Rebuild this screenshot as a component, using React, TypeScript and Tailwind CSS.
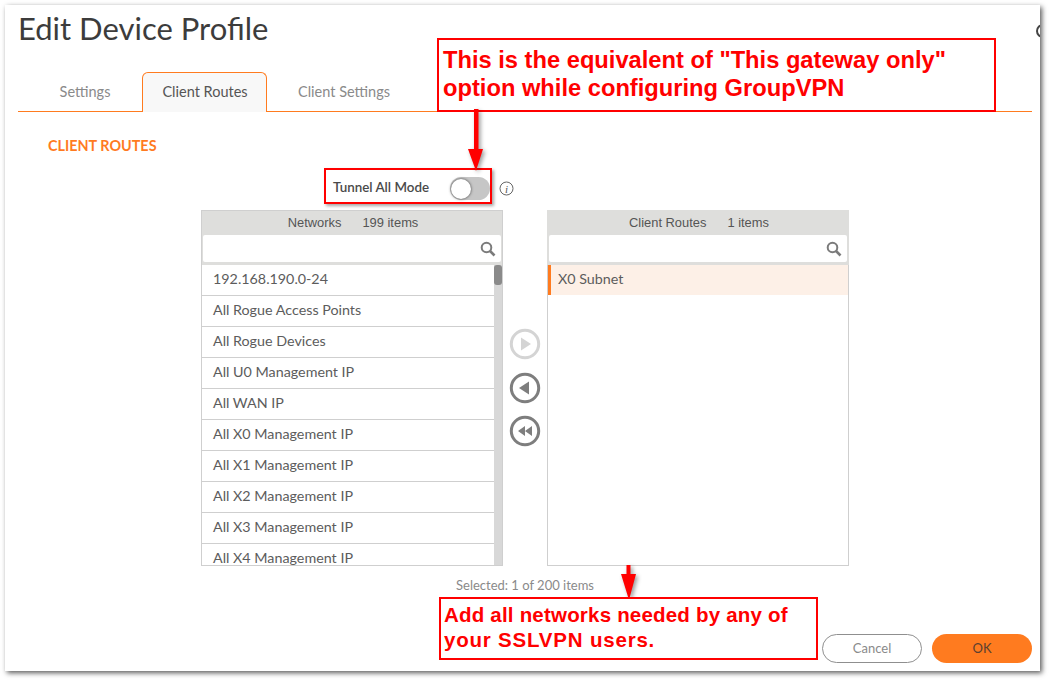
const font = { fontFamily: '"Lato", "Open Sans", sans-serif' };

const networks = [
  "192.168.190.0-24",
  "All Rogue Access Points",
  "All Rogue Devices",
  "All U0 Management IP",
  "All WAN IP",
  "All X0 Management IP",
  "All X1 Management IP",
  "All X2 Management IP",
  "All X3 Management IP",
  "All X4 Management IP",
];

function Head({ title, count }: { title: string; count: string }) {
  return (
    <div className="-mx-px -mt-px bg-[#dededc] flex flex-col shrink-0 h-[55px]">
      <div className="h-[25px] flex items-center justify-center text-[12.9px] text-[#555] shrink-0 pl-[2px]" style={{ fontFamily: '"Liberation Sans", sans-serif' }}>
        <span>{title}</span>
        <span className="ml-[21px]">{count}</span>
      </div>
      <div className="h-[27px] mx-[2px] bg-white rounded-[2px] flex items-center justify-end pr-[5px] shrink-0">
        <svg width="16" height="16" viewBox="0 0 16 16" fill="none" stroke="#7b7b7b" strokeWidth="2">
          <circle cx="6.5" cy="6.5" r="4.8" />
          <path d="M10 10l4.5 4.5" strokeWidth="2.6" />
        </svg>
      </div>
    </div>
  );
}

function RoundBtn({ color, children }: { color: string; children: React.ReactNode }) {
  return (
    <svg width="32" height="32" viewBox="0 0 32 32" fill="none">
      <circle cx="16" cy="16" r="13.7" stroke={color} strokeWidth="3" />
      <g fill={color}>{children}</g>
    </svg>
  );
}

function Arrow({ className, children }: { className: string; children: React.ReactNode }) {
  return <div className={`absolute ${className}`} style={{ filter: "drop-shadow(2px 2px 2px rgba(0,0,0,.4))" }}>{children}</div>;
}

export default function App() {
  return (
    <div className="w-[1050px] h-[681px] bg-white overflow-hidden pt-[5px] pl-[5px]" style={font}>
      <div className="relative w-[1035px] h-[666px] bg-white shadow-[2px_2px_5px_rgba(0,0,0,0.65)] px-[13px] flex flex-col overflow-hidden">
        <h1 className="text-[31px] leading-[36px] text-[#3c3c3c] mt-[5px] font-normal">Edit Device Profile</h1>
        <div className="absolute right-[-10px] top-[19px] w-[14px] h-[14px] rounded-full border-2 border-[#444]"></div>

        <div className="mt-[19px] h-[47px] shrink-0 w-[1014px] border-b border-[#ff7b1f] flex items-end text-[14.5px] text-[#8a8a8a]">
          <div className="w-[124px] h-[39px] -mb-px flex items-center justify-center pb-[2px] pl-[10px]">Settings</div>
          <div className="w-[125px] h-[40px] -mb-px bg-[#f8f8f8] border border-b-0 border-[#ff7b1f] rounded-t-[6px] flex items-center justify-center pb-[2px] pl-[1px] text-[#555]">Client Routes</div>
          <div className="w-[154px] h-[39px] -mb-px flex items-center justify-center pb-[2px]">Client Settings</div>
        </div>

        <div className="mt-[25px] ml-[30px] text-[14.4px] leading-[17px] font-bold text-[#ff7b1f]">CLIENT ROUTES</div>

        <div className="mt-[23px] ml-[315px] h-[23px] flex items-center">
          <span className="text-[13.4px] font-semibold text-[#4a4a4a] w-[117px] pb-[2px]">Tunnel All Mode</span>
          <div className="w-[40px] h-[23px] rounded-full bg-[#c6c6c6] flex items-center pl-[1px]">
            <div className="w-[20px] h-[20px] rounded-full bg-white shadow-[0_0_3px_rgba(0,0,0,0.7)]"></div>
          </div>
          <svg className="ml-[9px]" width="15" height="15" viewBox="0 0 15 15" fill="none">
            <circle cx="7.5" cy="7.5" r="6.5" stroke="#666" />
            <text x="7.5" y="11.5" textAnchor="middle" fontSize="11" fontStyle="italic" fontFamily="Liberation Serif, serif" fill="#555">i</text>
          </svg>
        </div>

        <div className="mt-[10px] ml-[183px] flex items-start">
          <div className="w-[302px] h-[356px] border border-[#cfcfcf] flex flex-col overflow-hidden">
            <Head title="Networks" count="199 items" />
            <div className="relative flex-1 overflow-hidden">
              <div className="absolute right-0 top-0 bottom-0 w-[8px] bg-[#d8d8d8]">
                <div className="h-[20px] rounded-[3px] bg-[#8a8a8a]"></div>
              </div>
              {networks.map((n) => (
                <div key={n} className="h-[31px] shrink-0 flex items-center pl-[11px] pb-[2px] border-b border-[#cfcfcf] text-[14.3px] text-[#5c5c5c]">{n}</div>
              ))}
            </div>
          </div>

          <div className="w-[44px] flex flex-col items-center pt-[118px]">
            <RoundBtn color="#d4d4d4"><path d="M12 9.5l10 6.5-10 6.5z" /></RoundBtn>
            <div className="mt-[12px]"><RoundBtn color="#7e7e7e"><path d="M20 9.5l-10 6.5 10 6.5z" /></RoundBtn></div>
            <div className="mt-[11px]"><RoundBtn color="#7e7e7e"><path d="M16 11l-7 5 7 5zM23 11l-7 5 7 5z" /></RoundBtn></div>
          </div>

          <div className="w-[302px] h-[356px] border border-[#cfcfcf] flex flex-col">
            <Head title="Client Routes" count="1 items" />
            <div className="h-[30px] bg-[#fdf0e7] border-l-[3px] border-[#ff7b1f] flex items-center pl-[7px] pb-[2px] text-[14.3px] text-[#5c5c5c]">X0 Subnet</div>
          </div>
        </div>

        <div className="mt-[11px] ml-[438px] text-[13px] leading-[16px] text-[#8a8a8a]">Selected: 1 of 200 items</div>

        <div className="mt-[41px] flex justify-end gap-[10px] w-[1014px]">
          <div className="w-[100px] h-[29px] rounded-full border border-[#8f8f8f] flex items-center justify-center text-[13px] text-[#8a8a8a]">Cancel</div>
          <div className="w-[100px] h-[29px] rounded-full bg-[#ff7b1f] flex items-center justify-center text-[13px] text-[#5a4030]">OK</div>
        </div>

        {/* annotations */}
        <div className="absolute left-[432px] top-[33px] w-[559px] h-[74px] border-2 border-[#ff0000] bg-white pl-[4px] pt-[6px] text-[#ff0000] text-[23.7px] leading-[28px] font-bold" style={{ fontFamily: '"Liberation Sans", sans-serif' }}>
          This is the equivalent of "This gateway only"<br />option while configuring GroupVPN
        </div>
        <div className="absolute left-[319px] top-[163px] w-[168px] h-[36px] border-2 border-[#ff0000] shadow-[2px_2px_3px_rgba(0,0,0,0.35)]"></div>
        <Arrow className="left-[463px] top-[104px]">
          <svg width="15" height="62" viewBox="0 0 15 62"><path d="M6 0h4.5v40H15L8 62 0 40h6z" fill="#ff0000" /></svg>
        </Arrow>
        <Arrow className="left-[616px] top-[560px]">
          <svg width="15" height="35" viewBox="0 0 15 35"><path d="M5.5 0h4v9H15L8 35 0 9h5.5z" fill="#ff0000" /></svg>
        </Arrow>
        <div className="absolute left-[434px] top-[592px] w-[379px] h-[63px] border-2 border-[#ff0000] bg-white pl-[3px] pt-[3px] text-[#ff0000] text-[20.5px] leading-[25px] font-bold tracking-[0.2px]" style={{ fontFamily: '"Liberation Sans", sans-serif' }}>
          Add all networks needed by any of<br /><span className="tracking-[0.8px]">your SSLVPN users.</span>
        </div>
      </div>
    </div>
  );
}
